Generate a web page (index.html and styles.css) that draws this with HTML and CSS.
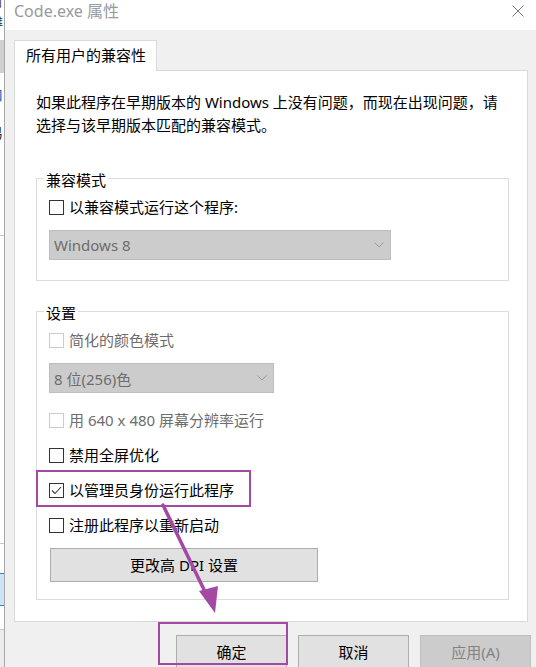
FILE: index.html
```html
<!DOCTYPE html>
<html lang="zh-CN">
<head>
<meta charset="utf-8">
<title>Code.exe 属性</title>
<link rel="stylesheet" href="styles.css">
</head>
<body>
<div class="screen">
  <div class="bgwin">
    <div class="bg-top"><span class="clip c1">口</span><span class="clip c2">推</span></div>
    <div class="bg-grey"></div>
    <div class="bg-gap1"><span class="clip blue">口</span><span class="clip c4">易</span></div>
    <div class="bg-line"></div>
    <div class="bg-gap2"><span class="clip">i</span></div>
    <div class="bg-line"></div>
    <div class="bg-sel"></div>
    <div class="bg-rest"></div>
  </div>
  <div class="dialog">
    <div class="titlebar">
      <span class="title">Code.exe 属性</span>
      <svg class="close" width="12" height="12" viewBox="0 0 12 12"><path d="M0.5 0.5L11.5 11.5M11.5 0.5L0.5 11.5" stroke="#7a7a7a" stroke-width="1" fill="none"/></svg>
    </div>
    <div class="body">
      <div class="tab">所有用户的兼容性</div>
      <div class="panel">
        <p class="desc">如果此程序在早期版本的 Windows 上没有问题，而现在出现问题，请<br>选择与该早期版本匹配的兼容模式。</p>
        <div class="group g1">
          <div class="group-title">兼容模式</div>
          <div class="row r-first"><span class="cb"></span><span>以兼容模式运行这个程序:</span></div>
          <div class="select sel-wide"><span>Windows 8</span><svg width="10" height="6" viewBox="0 0 10 6"><path d="M0.5 0.5L5 5L9.5 0.5" stroke="#9a9a9a" fill="none"/></svg></div>
        </div>
        <div class="group g2">
          <div class="group-title">设置</div>
          <div class="row r-first2 disabled"><span class="cb"></span><span>简化的颜色模式</span></div>
          <div class="select sel-narrow"><span>8 位(256)色</span><svg width="10" height="6" viewBox="0 0 10 6"><path d="M0.5 0.5L5 5L9.5 0.5" stroke="#9a9a9a" fill="none"/></svg></div>
          <div class="row r-after-sel disabled"><span class="cb"></span><span>用 640 x 480 屏幕分辨率运行</span></div>
          <div class="row r-next"><span class="cb"></span><span>禁用全屏优化</span></div>
          <div class="row r-next"><span class="cb checked"><svg width="13" height="13" viewBox="0 0 13 13"><path d="M2 6.5L5 9.5L11 3" stroke="#3a3a3a" stroke-width="1.1" fill="none"/></svg></span><span>以管理员身份运行此程序</span></div>
          <div class="row r-next"><span class="cb"></span><span>注册此程序以重新启动</span></div>
          <div class="btn dpi">更改高 DPI 设置</div>
        </div>
      </div>
      <div class="buttons">
        <div class="btn dlg">确定</div>
        <div class="btn dlg">取消</div>
        <div class="btn dlg off">应用(A)</div>
      </div>
    </div>
  </div>
  <div class="mark mark-admin"></div>
  <div class="mark mark-ok"></div>
  <svg class="arrow" width="536" height="667" viewBox="0 0 536 667">
    <path d="M163 505L209 600" stroke="#a349a4" stroke-width="3.5" fill="none" stroke-linecap="round"/>
    <path d="M215 613L199 591L218 586Z" fill="#a349a4"/>
  </svg>
</div>
</body>
</html>
```
FILE: styles.css
```css
* { box-sizing: border-box; }
body {
  margin: 0;
  font-family: "Noto Sans", "Noto Sans CJK SC", sans-serif;
  font-size: 15px;
  color: #000;
}
.screen {
  position: relative;
  width: 536px;
  height: 667px;
  overflow: hidden;
  display: flex;
  background: #f0f0f0;
}

/* background window sliver */
.bgwin {
  width: 5px;
  flex: none;
  border-right: 1px solid #a8a8a8;
  background: #fff;
  display: flex;
  flex-direction: column;
  overflow: hidden;
}
.clip {
  display: block;
  margin-left: -11px;
  font-size: 14px;
  line-height: 14px;
  height: 14px;
  white-space: nowrap;
  color: #222;
}
.clip.c1 { font-size: 10px; line-height: 10px; height: 10px; margin-left: -8px; margin-top: -2px; }
.clip.c2 { font-size: 11px; line-height: 11px; height: 11px; margin-left: -8px; margin-top: 8px; }
.clip.blue { color: #1a63c4; }
.bg-top { height: 40px; flex: none; }
.bg-grey { height: 33px; background: #d0d0d0; flex: none; }
.bg-gap1 { height: 162px; padding-top: 15px; flex: none; }
.bg-gap1 .c4 { margin-top: 24px; }
.bg-line { height: 1px; background: #c8c8c8; flex: none; }
.bg-gap2 { height: 307px; padding-top: 33px; flex: none; }
.bg-sel { height: 33px; background: #cde4f7; border-top: 1px solid #3e7fbd; border-bottom: 1px solid #3e7fbd; margin-top: 29px; flex: none; }
.bg-rest { flex: 1; border-top: 1px solid #c8c8c8; margin-top: 23px; background: #ececec; }

/* dialog */
.dialog {
  flex: 1;
  display: flex;
  flex-direction: column;
  min-width: 0;
}
.titlebar {
  height: 30px;
  flex: none;
  background: #fff;
  display: flex;
  justify-content: space-between;
  align-items: flex-start;
  padding: 0 12px 0 9px;
}
.title {
  line-height: 23px;
  color: #9a9a9a;
  font-size: 16px;
}
.close { margin-top: 5px; }

.body {
  flex: 1;
  background: #f0f0f0;
  padding: 10px 5px 0 9px;
}
.tab {
  position: relative;
  z-index: 1;
  width: 143px;
  height: 31px;
  margin-bottom: -1px;
  background: #fff;
  border: 1px solid #d9d9d9;
  border-bottom: none;
  padding-left: 11px;
  line-height: 29px;
}
.panel {
  margin-right: 3px;
  background: #fff;
  border: 1px solid #d9d9d9;
  padding: 20px 0 21px 21px;
}
.desc {
  margin: 0;
  line-height: 23px;
  white-space: nowrap;
}
.group {
  width: 473px;
  border: 1px solid #dcdcdc;
  padding: 0 0 20px 12px;
}
.g1 { margin-top: 41px; }
.g2 { margin-top: 30px; padding-bottom: 17px; }
.group-title {
  width: fit-content;
  margin: -9px 0 0 -5px;
  padding: 0 2px;
  background: #fff;
  line-height: 20px;
  height: 20px;
}
.row {
  height: 20px;
  display: flex;
  align-items: center;
  gap: 5px;
  line-height: 20px;
}
.r-first { margin-top: 7px; }
.r-first2 { margin-top: 7px; }
.r-after-sel { margin-top: 17px; }
.r-next { margin-top: 15px; }
.row.disabled { color: #6d6d6d; }
.cb {
  width: 15px;
  height: 15px;
  flex: none;
  border: 1px solid #333;
  background: #fff;
  display: flex;
}
.disabled .cb { border-color: #cccccc; }

.select {
  margin-top: 13px;
  height: 30px;
  background: #cccccc;
  border: 1px solid #bdbdbd;
  display: flex;
  align-items: center;
  justify-content: space-between;
  padding: 0 6px 0 4px;
  color: #6d6d6d;
}
.sel-wide { width: 342px; }
.sel-narrow { width: 225px; }

.btn {
  height: 34px;
  background: #e1e1e1;
  border: 1px solid #adadad;
  display: flex;
  align-items: center;
  justify-content: center;
  line-height: 20px;
}
.dpi { width: 268px; margin: 13px 0 0 1px; }

.buttons {
  margin-top: 13px;
  display: flex;
  justify-content: flex-end;
  gap: 11px;
}
.dlg { width: 111px; }
.dlg.off { background: #cccccc; border-color: #bfbfbf; color: #838383; }

/* annotation overlays */
.mark {
  position: absolute;
  border: 2px solid #a349a4;
  pointer-events: none;
}
.mark-admin { left: 36px; top: 470px; width: 215px; height: 37px; }
.mark-ok { left: 158px; top: 622px; width: 130px; height: 43px; }
.arrow { position: absolute; left: 0; top: 0; pointer-events: none; }
```
